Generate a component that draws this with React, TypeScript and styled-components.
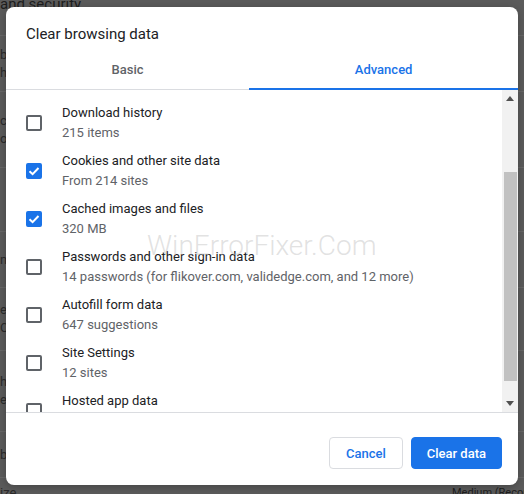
import React from "react";
import styled, { createGlobalStyle } from "styled-components";

const Global = createGlobalStyle`
  html, body { margin: 0; padding: 0; }
  body { font-family: Roboto, "Noto Sans", Arial, sans-serif; background: #5b5b5b; }
`;

const Page = styled.div`
  position: relative;
  width: 524px;
  height: 494px;
  overflow: hidden;
  background: #5b5b5b;
  color: #1b1b1b;
`;

const BgHeading = styled.div`
  height: 8px;
  line-height: 8px;
  font-size: 15px;
  white-space: nowrap;
  color: #1e1e1e;
`;

const BgSection = styled.div`
  display: flex;
  flex-direction: column;
  padding-top: 27px;
`;

const BgRow = styled.div<{ $h: number }>`
  height: ${(p) => p.$h}px;
  border-top: 1px solid #676767;
  display: flex;
  flex-direction: column;
  justify-content: center;
  font-size: 13px;
  line-height: 18px;
  white-space: nowrap;
  overflow: hidden;
`;

const BgSub = styled.span`
  color: #2a2a2a;
`;

const BgSplit = styled.div`
  display: flex;
  justify-content: space-between;
  align-items: center;
  height: 100%;
`;

const BgValue = styled.span`
  width: 72px;
  overflow: hidden;
  white-space: nowrap;
  font-size: 11px;
  color: #1e1e1e;
`;

const Dialog = styled.div`
  position: absolute;
  left: 6px;
  top: 7px;
  width: 512px;
  height: 478px;
  background: #fff;
  border-radius: 8px;
  overflow: hidden;
  display: flex;
  flex-direction: column;
  box-shadow: 0 2px 8px rgba(0, 0, 0, 0.25);
`;

const Title = styled.div`
  padding: 17px 20px 6px;
  font-size: 15px;
  line-height: 20px;
  color: #202124;
`;

const Tabs = styled.div`
  display: flex;
  border-bottom: 1px solid #dadce0;
`;

const Tab = styled.div<{ $active?: boolean }>`
  position: relative;
  flex: 1 1 auto;
  height: 39px;
  display: flex;
  align-items: center;
  justify-content: center;
  font-size: 13px;
  font-weight: 500;
  color: ${(p) => (p.$active ? "#1a73e8" : "#5f6368")};
  &::after {
    content: "";
    position: absolute;
    left: 0;
    right: 0;
    bottom: -1px;
    height: 2px;
    background: ${(p) => (p.$active ? "#1a73e8" : "transparent")};
  }
`;

const Body = styled.div`
  position: relative;
  flex: 1;
  display: flex;
  min-height: 0;
`;

const List = styled.div`
  flex: 1;
  overflow: hidden;
  padding-top: 9px;
  display: flex;
  flex-direction: column;
`;

const Row = styled.div`
  flex: none;
  min-height: 48px;
  display: flex;
  align-items: center;
  gap: 20px;
  padding-left: 20px;
`;

const Box = styled.div<{ $checked?: boolean }>`
  flex: none;
  width: 16px;
  height: 16px;
  box-sizing: border-box;
  border-radius: 2px;
  border: 2px solid ${(p) => (p.$checked ? "#1a73e8" : "#5f6368")};
  background: ${(p) => (p.$checked ? "#1a73e8" : "#fff")};
  display: flex;
  align-items: center;
  justify-content: center;
`;

const Texts = styled.div`
  display: flex;
  flex-direction: column;
  font-size: 13px;
  line-height: 20px;
`;

const Label = styled.span`
  color: #202124;
`;

const Sub = styled.span`
  color: #5f6368;
`;

const ScrollBar = styled.div`
  flex: none;
  width: 16px;
  background: #f1f1f1;
  display: flex;
  flex-direction: column;
`;

const Arrow = styled.div`
  height: 17px;
  display: flex;
  align-items: center;
  justify-content: center;
`;

const Track = styled.div`
  flex: 1;
  display: flex;
  flex-direction: column;
  align-items: center;
`;

const Thumb = styled.div<{ $top: number; $h: number }>`
  margin-top: ${(p) => p.$top}px;
  width: 13px;
  height: ${(p) => p.$h}px;
  background: #c1c1c1;
`;

const Watermark = styled.div`
  position: absolute;
  left: 141px;
  top: 139px;
  font-size: 28px;
  line-height: 34px;
  font-weight: 300;
  color: rgba(190, 190, 190, 0.45);
  pointer-events: none;
  white-space: nowrap;
`;

const Footer = styled.div`
  border-top: 1px solid #dadce0;
  padding: 24px 16px 16px;
  display: flex;
  justify-content: flex-end;
  gap: 8px;
`;

const Button = styled.button<{ $primary?: boolean }>`
  height: 32px;
  padding: 0 ${(p) => (p.$primary ? 15 : 16)}px;
  border-radius: 4px;
  font-family: Roboto, Arial, sans-serif;
  font-size: 13px;
  font-weight: 500;
  cursor: pointer;
  border: 1px solid ${(p) => (p.$primary ? "#1a73e8" : "#dadce0")};
  background: ${(p) => (p.$primary ? "#1a73e8" : "#fff")};
  color: ${(p) => (p.$primary ? "#fff" : "#1a73e8")};
`;

const items = [
  { label: "Download history", sub: "215 items", checked: false },
  { label: "Cookies and other site data", sub: "From 214 sites", checked: true },
  { label: "Cached images and files", sub: "320 MB", checked: true },
  {
    label: "Passwords and other sign-in data",
    sub: "14 passwords (for flikover.com, validedge.com, and 12 more)",
    checked: false,
  },
  { label: "Autofill form data", sub: "647 suggestions", checked: false },
  { label: "Site Settings", sub: "12 sites", checked: false },
  { label: "Hosted app data", sub: "2 apps (Gmail, Chrome Web Store)", checked: false },
];

const Check = () => (
  <svg width="12" height="12" viewBox="0 0 12 12">
    <path d="M1.5 6.2 L4.6 9.2 L10.5 3" fill="none" stroke="#fff" strokeWidth="2" />
  </svg>
);

const Tri = ({ up }: { up?: boolean }) => (
  <svg width="8" height="5" viewBox="0 0 8 5">
    <path d={up ? "M0 5 L4 0 L8 5 Z" : "M0 0 L8 0 L4 5 Z"} fill="#505050" />
  </svg>
);

const bgRows: { h: number; lines: string[] }[] = [
  { h: 55, lines: ["browsing data", "history, cookies"] },
  { h: 75, lines: ["cookies", "on"] },
  { h: 63, lines: [""] },
  { h: 55, lines: ["n"] },
  { h: 62, lines: ["et", "C"] },
  { h: 80, lines: ["h", "e"] },
  { h: 45, lines: ["b"] },
];

export default function App() {
  return (
    <>
      <Global />
      <Page>
        <BgHeading>and security</BgHeading>
        <BgSection>
          {bgRows.map((r, i) => (
            <BgRow key={i} $h={r.h}>
              {r.lines.map((l, j) => (
                <BgSub key={j}>{l}</BgSub>
              ))}
            </BgRow>
          ))}
          <BgRow $h={30}>
            <BgSplit>
              <BgSub>ize</BgSub>
              <BgValue>Medium (Recommended)</BgValue>
            </BgSplit>
          </BgRow>
        </BgSection>
        <Dialog>
          <Title>Clear browsing data</Title>
          <Tabs>
            <Tab>Basic</Tab>
            <Tab $active>Advanced</Tab>
          </Tabs>
          <Body>
            <List>
              {items.map((it) => (
                <Row key={it.label}>
                  <Box $checked={it.checked}>{it.checked && <Check />}</Box>
                  <Texts>
                    <Label>{it.label}</Label>
                    <Sub>{it.sub}</Sub>
                  </Texts>
                </Row>
              ))}
            </List>
            <ScrollBar>
              <Arrow>
                <Tri up />
              </Arrow>
              <Track>
                <Thumb $top={65} $h={209} />
              </Track>
              <Arrow>
                <Tri />
              </Arrow>
            </ScrollBar>
            <Watermark>WinErrorFixer.Com</Watermark>
          </Body>
          <Footer>
            <Button>Cancel</Button>
            <Button $primary>Clear data</Button>
          </Footer>
        </Dialog>
      </Page>
    </>
  );
}
